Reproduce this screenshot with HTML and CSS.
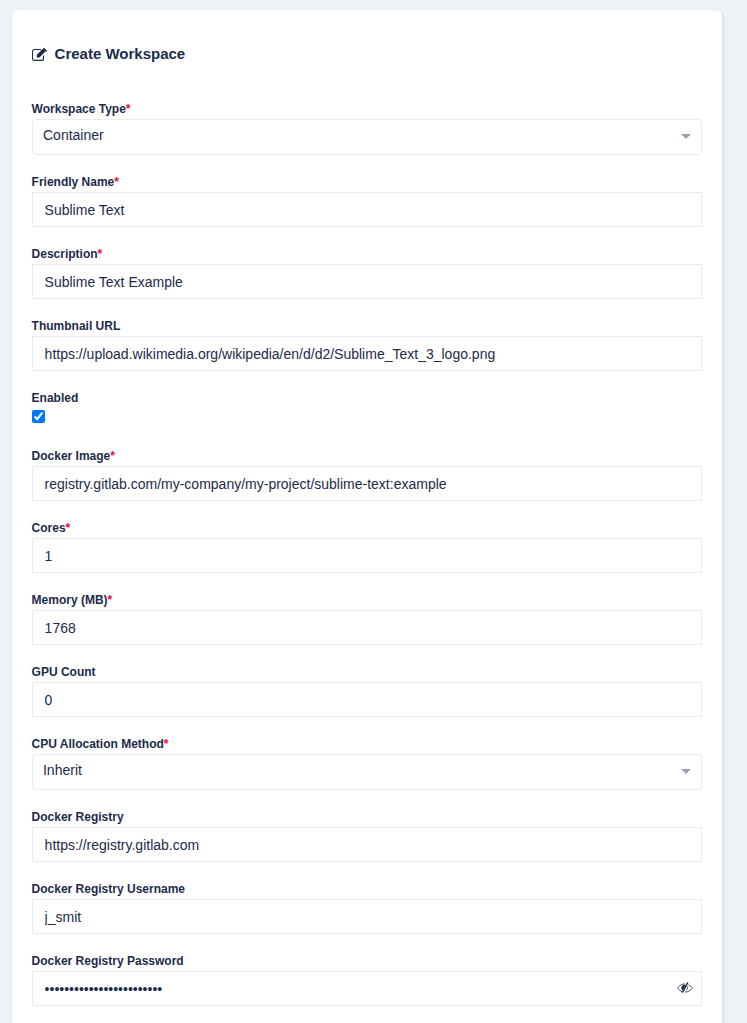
FILE: index.html
```html
<!DOCTYPE html>
<html lang="en">
<head>
    <meta charset="UTF-8">
    <meta name="viewport" content="width=device-width, initial-scale=1.0">
    <title>Create Workspace</title>
    <link rel="stylesheet" href="styles.css">
</head>
<body>
    <div class="card">
        <h2 class="card-title">
            <svg class="title-icon" viewBox="0 0 15 13">
                <path class="icon-line" d="M11.500 7.500V10.400a2 2 0 0 1-2 2H2.500a2 2 0 0 1-2-2V3.500a2 2 0 0 1 2-2H9"/>
                <path d="M4.800 6.800L10.800 .8 13.400 3.400 7.400 9.400H4.800zM11.600 0L12.300 0 14.800 2.500V3.100L14 3.900 10.900 .8z"/>
            </svg>
            Create Workspace
        </h2>
        <form class="form">
            <div class="field">
                <label class="required">Workspace Type</label>
                <div class="select">Container</div>
            </div>
            <div class="field">
                <label class="required">Friendly Name</label>
                <input type="text" value="Sublime Text">
            </div>
            <div class="field">
                <label class="required">Description</label>
                <input type="text" value="Sublime Text Example">
            </div>
            <div class="field">
                <label>Thumbnail URL</label>
                <input type="text" value="https://upload.wikimedia.org/wikipedia/en/d/d2/Sublime_Text_3_logo.png">
            </div>
            <div class="field field-check">
                <label>Enabled</label>
                <input type="checkbox" checked>
            </div>
            <div class="field">
                <label class="required">Docker Image</label>
                <input type="text" value="registry.gitlab.com/my-company/my-project/sublime-text:example">
            </div>
            <div class="field">
                <label class="required">Cores</label>
                <input type="text" value="1">
            </div>
            <div class="field">
                <label class="required">Memory (MB)</label>
                <input type="text" value="1768">
            </div>
            <div class="field">
                <label>GPU Count</label>
                <input type="text" value="0">
            </div>
            <div class="field">
                <label class="required">CPU Allocation Method</label>
                <div class="select">Inherit</div>
            </div>
            <div class="field">
                <label>Docker Registry</label>
                <input type="text" value="https://registry.gitlab.com">
            </div>
            <div class="field">
                <label>Docker Registry Username</label>
                <input type="text" value="j_smit">
            </div>
            <div class="field">
                <label>Docker Registry Password</label>
                <div class="password">
                    <input type="password" value="abcdefghijklmnopqrstuvwx">
                    <svg class="eye-icon" viewBox="0 0 16 12">
                        <path class="icon-line icon-thin" d="M.6 6C2.500 3.300 5 1.900 8 1.900M11.300 2.800C13 3.500 14.400 4.600 15.400 6 13.600 8.600 11 10.100 8 10.100M5.300 9.700C3.500 9.100 1.900 7.800.6 6"/>
                        <path d="M4.200 5.800A3.800 3.800 0 0 1 8.800 3L5.800 8.600A3.800 3.800 0 0 1 4.200 5.800z"/>
                        <path d="M10.300 .1L11.500 .8 5.900 10.900 4.700 10.200z"/>
                        <path class="icon-line icon-thin" d="M10.500 4.500A3 3 0 0 1 9 8.300"/>
                    </svg>
                </div>
            </div>
        </form>
    </div>
</body>
</html>
```

FILE: styles.css
```css
html, body {
    height: 100%;
    overflow: hidden;
}

body {
    margin: 0;
    padding: 10px 25px 0 12px;
    box-sizing: border-box;
    background-color: #eff2f7;
    color: #1c2b4a;
    font-family: "Liberation Sans", Arial, sans-serif;
}

.card {
    background-color: #fff;
    border-radius: 6px;
    box-shadow: 1px 2px 4px rgba(30, 40, 70, 0.15);
    padding: 33px 20px 20px 19.6px;
}

.card-title {
    display: flex;
    align-items: center;
    gap: 8px;
    margin: 0 0 36px;
    font-size: 15px;
    font-weight: bold;
    line-height: 22px;
}

.title-icon {
    width: 15px;
    height: 13px;
    fill: currentColor;
}

.icon-line {
    fill: none;
    stroke: currentColor;
    stroke-width: 1.1;
}

.icon-thin {
    stroke-width: 0.8;
}

.field {
    margin-bottom: 19px;
}

.field label {
    display: block;
    margin-bottom: 2px;
    font-size: 12px;
    font-weight: bold;
    line-height: 16px;
}

.required::after {
    content: "*";
    color: #f1023a;
}

.field input[type="text"],
.field input[type="password"] {
    display: block;
    width: 100%;
    height: 35px;
    padding: 0 12px;
    box-sizing: border-box;
    border: 1px solid #e9ecef;
    border-radius: 0;
    outline: none;
    color: #1c2b4a;
    font-family: inherit;
    font-size: 14px;
}

.select {
    position: relative;
    height: 36px;
    box-sizing: border-box;
    padding: 0 10.400px;
    border: 1px solid #e9ecef;
    border-radius: 4px;
    font-size: 14px;
    line-height: 30px;
}

.select::after {
    content: "";
    position: absolute;
    right: 10px;
    top: 14px;
    border-left: 5px solid transparent;
    border-right: 5px solid transparent;
    border-top: 5px solid #9a9fb5;
}

.field-check {
    height: 39px;
}

.field-check input {
    display: block;
    width: 13px;
    height: 13px;
    margin: 4px 0 0;
}

.password {
    position: relative;
}

.eye-icon {
    position: absolute;
    right: 9px;
    top: 11px;
    width: 16px;
    height: 12px;
    fill: currentColor;
}
```
